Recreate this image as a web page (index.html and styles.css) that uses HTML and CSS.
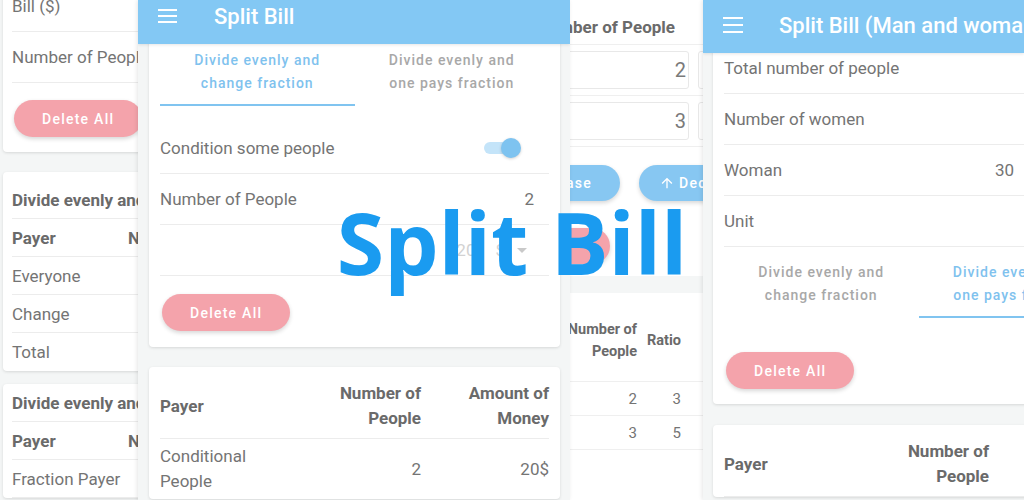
FILE: index.html
```html
<!DOCTYPE html>
<html lang="en">
<head>
<meta charset="utf-8">
<title>Split Bill</title>
<link rel="stylesheet" href="styles.css">
</head>
<body>
<main class="canvas">

  <!-- Screenshot A (left) -->
  <section class="shot shot-a">
    <div class="card a1">
      <div class="row r51">Bill ($)</div>
      <div class="row r51">Number of People</div>
      <div class="btn-wrap a-btn"><button class="pill pink">Delete All</button></div>
    </div>
    <div class="card a2">
      <div class="row r38 bold">Divide evenly and change fraction</div>
      <div class="row r38 bold"><span class="a-c1">Payer</span><span>Number of People</span></div>
      <div class="row r38">Everyone</div>
      <div class="row r38">Change</div>
      <div class="row r38 last">Total</div>
    </div>
    <div class="card a3">
      <div class="row r38 bold">Divide evenly and one pays fraction</div>
      <div class="row r38 bold"><span class="a-c1">Payer</span><span>Number of People</span></div>
      <div class="row r38">Fraction Payer</div>
    </div>
  </section>

  <!-- Screenshot C (behind) -->
  <section class="shot shot-c">
    <div class="c-card1">
      <div class="c-head">Number of People</div>
      <div class="c-inrow"><div class="c-box1">2</div><div class="c-box2"></div></div>
      <div class="c-inrow"><div class="c-box1">3</div><div class="c-box2"></div></div>
      <div class="c-btns">
        <button class="pill blue c-inc">Increase</button>
        <button class="pill blue c-dec"><svg class="arrow" viewBox="0 0 24 24" width="16" height="16"><path d="M4 12l1.41 1.41L11 7.83V20h2V7.83l5.58 5.59L20 12l-8-8-8 8z" fill="#fff"/></svg>Decrease</button>
      </div>
      <button class="pill pink c-del">Delete All</button>
    </div>
    <div class="c-card2">
      <div class="c-trow c-thead"><span class="cn">Number of<br>People</span><span class="cr">Ratio</span></div>
      <div class="c-trow c-data"><span class="cn">2</span><span class="cr">3</span></div>
      <div class="c-trow c-data"><span class="cn">3</span><span class="cr">5</span></div>
    </div>
  </section>

  <!-- Screenshot B (middle) -->
  <section class="shot shot-b">
    <header class="appbar b-bar">
      <span class="burger"><i></i><i></i><i></i></span>
      <span class="title">Split Bill</span>
    </header>
    <div class="card wide b1">
      <div class="tabs">
        <div class="tab active">Divide evenly and<br>change fraction</div>
        <div class="tab">Divide evenly and<br>one pays fraction</div>
      </div>
      <div class="list">
        <div class="row r51">Condition some people<span class="toggle"><span class="track"></span><span class="thumb"></span></span></div>
        <div class="row r51">Number of People<span class="val b-val">2</span></div>
        <div class="row r51 dd"><span class="dd-n">20</span><span class="dd-u">$</span><svg class="caret" viewBox="0 0 10 5" width="10" height="5"><path d="M0 0h10L5 5z" fill="#c9c9c9"/></svg></div>
      </div>
      <div class="btn-wrap b-btn"><button class="pill pink">Delete All</button></div>
    </div>
    <div class="card wide b2">
      <div class="trow thead"><span>Payer</span><span class="num">Number of<br>People</span><span class="num">Amount of<br>Money</span></div>
      <div class="trow tdata"><span>Conditional<br>People</span><span class="num">2</span><span class="num">20$</span></div>
    </div>
  </section>

  <!-- Screenshot D (right) -->
  <section class="shot shot-d">
    <header class="appbar d-bar">
      <span class="burger big"><i></i><i></i><i></i></span>
      <span class="title">Split Bill (Man and woman)</span>
    </header>
    <div class="card wide d1">
      <div class="row r51">Total number of people</div>
      <div class="row r51">Number of women</div>
      <div class="row r51">Woman<span class="val d-val">30</span></div>
      <div class="row r51">Unit</div>
      <div class="tabs">
        <div class="tab">Divide evenly and<br>change fraction</div>
        <div class="tab active">Divide evenly and<br>one pays fraction</div>
      </div>
      <div class="btn-wrap d-btn"><button class="pill pink">Delete All</button></div>
    </div>
    <div class="card wide d2">
      <div class="trow thead d-thead"><span>Payer</span><span class="num">Number of<br>People</span><span class="num">Amount of<br>Money</span></div>
    </div>
  </section>

  <h1 class="hero">Split Bill</h1>
</main>
</body>
</html>
```

FILE: styles.css
```css
* { box-sizing: border-box; margin: 0; padding: 0; }
html, body { width: 1024px; height: 500px; overflow: hidden; }
body {
  background: #f4f6f6;
  font-family: Roboto, "Liberation Sans", sans-serif;
  font-size: 17px;
  color: #747474;
}
.canvas { position: relative; width: 1024px; height: 500px; overflow: hidden; }

.shot { position: absolute; top: 0; height: 500px; overflow: hidden; background: #f4f6f6; }
.shot-a { left: 0; width: 138px; }
.shot-c { left: 570px; width: 133px; }
.shot-b { left: 138px; width: 432px; box-shadow: -1px 0 4px rgba(0,0,0,.10); }
.shot-d { left: 703px; width: 321px; box-shadow: -1px 0 4px rgba(0,0,0,.10); }

.card { background: #fff; border-radius: 4px; box-shadow: 0 1px 3px rgba(0,0,0,.12); }
.card.wide { width: 411px; }

.row {
  display: flex; align-items: center; white-space: nowrap;
  border-bottom: 1px solid #ececec;
}
.row.last { border-bottom: none; }
.r51 { height: 51px; }
.r38 { height: 38px; }
.bold { font-weight: 700; color: #6a6a6a; }

.pill {
  height: 37px; border: none; border-radius: 19px;
  padding: 0 28px; margin-left: 2px; flex-shrink: 0;
  font-family: Roboto, "Liberation Sans", sans-serif;
  font-size: 14px; font-weight: 500; letter-spacing: 1.25px;
  color: #fff; white-space: nowrap;
  box-shadow: 0 2px 4px rgba(0,0,0,.16);
  display: inline-flex; align-items: center;
}
.pink { background: #f4a3ab; }
.blue { background: #87c7f2; }

/* A */
.a1 { margin: -19px 0 0 3px; width: 300px; padding: 0 0 15px 9px; }
.a-btn { padding-top: 17px; }
.a2 { margin: 20px 0 0 3px; width: 300px; padding: 9px 0 0 9px; }
.a3 { margin: 13px 0 0 3px; width: 300px; padding: 0 0 0 9px; }
.a-c1 { width: 116px; flex-shrink: 0; }

/* Appbar */
.appbar {
  position: relative; z-index: 2;
  height: 56px; background: #83c8f4;
  display: flex; align-items: center; padding-left: 20px;
  box-shadow: 0 1px 3px rgba(0,0,0,.10);
  color: #fff; white-space: nowrap;
}
.appbar .title { margin-left: 37px; font-size: 22px; font-weight: 500; flex-shrink: 0; }
.b-bar { margin-top: -12px; }
.d-bar { margin-top: -3px; }
.burger { display: flex; flex-direction: column; gap: 4px; width: 19px; flex-shrink: 0; }
.burger i { display: block; height: 2px; background: #fff; }
.burger.big { gap: 5px; width: 20px; }
.d-bar .title { margin-left: 36px; }

/* Tabs */
.tabs { display: grid; grid-template-columns: 1fr 1fr; }
.tab {
  height: 71px; padding-top: 14px; line-height: 23px;
  text-align: center; font-size: 14px; font-weight: 500; letter-spacing: 1px;
  color: #a8a8a8;
}
.tab.active { color: #7fc2ee; border-bottom: 2px solid #80c4f0; }

/* B */
.b1 { margin: -9px 0 0 11px; padding: 0 11px 16px; }
.list { margin-top: 17px; }
.val { margin-left: auto; }
.b-val { margin-right: 15px; }
.toggle { position: relative; margin-left: auto; margin-right: 28px; width: 37px; height: 20px; flex-shrink: 0; }
.track { position: absolute; left: 0; top: 4px; width: 32px; height: 12px; border-radius: 6px; background: #c4e4f9; }
.thumb { position: absolute; right: 0; top: 0; width: 20px; height: 20px; border-radius: 50%; background: #7ec3f0; box-shadow: 0 1px 3px rgba(0,0,0,.18); }
.dd { justify-content: flex-end; color: #d2d2d2; padding-right: 22px; }
.dd-u { margin-left: 20px; }
.caret { margin-left: 12px; }
.b-btn { padding-top: 18px; }
.b2 { margin: 20px 0 0 11px; padding: 0 11px; }

.trow {
  display: grid; grid-template-columns: 1fr 110px 128px; align-items: center;
  line-height: 25px;
}
.trow .num { text-align: right; }
.thead { padding: 14px 0 7px; border-bottom: 1px solid #ececec; font-weight: 700; color: #6a6a6a; }
.tdata { padding: 5px 0; }

/* C */
.c-card1 { background: #fff; height: 276px; }
.c-head {
  height: 45px; padding: 9px 28px 0 0;
  display: flex; justify-content: flex-end; align-items: center;
  font-weight: 700; color: #6a6a6a; white-space: nowrap;
  border-bottom: 1px solid #efefef;
}
.c-inrow { height: 51px; display: flex; align-items: center; border-bottom: 1px solid #efefef; }
.c-box1 {
  margin-left: -20px; width: 139px; height: 38px; flex-shrink: 0;
  border: 1px solid #e8e8e8; border-radius: 3px;
  display: flex; align-items: center; justify-content: flex-end;
  padding-right: 2px; font-size: 20px; color: #7a7a7a;
}
.c-box2 { margin-left: 9px; width: 40px; height: 38px; flex-shrink: 0; border: 1px solid #e8e8e8; border-radius: 3px; }
.c-btns { display: flex; padding-top: 18px; }
.c-btns .pill { height: 36px; }
.c-inc { margin-left: -90px; width: 140px; justify-content: flex-end; }
.c-dec { margin-left: 19px; padding-left: 20px; }
.arrow { margin-right: 4px; }
.c-del { margin: 27px 0 0 -120px; width: 160px; height: 36px; justify-content: center; }
.c-card2 { background: #fff; margin-top: 17px; height: 300px; }
.c-trow { display: flex; justify-content: flex-end; padding-right: 22px; border-bottom: 1px solid #efefef; }
.c-trow .cn { width: 80px; text-align: right; flex-shrink: 0; }
.c-trow .cr { width: 44px; text-align: right; flex-shrink: 0; }
.c-thead { padding-top: 26px; padding-bottom: 18px; font-size: 14.5px; line-height: 22px; font-weight: 700; color: #6a6a6a; align-items: center; }
.c-data { height: 34px; align-items: center; font-size: 15px; }

/* D */
.d1 { margin: -10px 0 0 10px; padding: 0 11px 15px; }
.d-val { margin-right: 99px; }
.d-btn { padding-top: 34px; }
.d2 { margin: 21px 0 0 10px; padding: 0 11px; }
.d-thead { grid-template-columns: 1fr 110px 124px; }

/* Hero */
.hero {
  position: absolute; left: 0; right: 0; top: 199px;
  text-align: center;
  font-family: "Open Sans", "DejaVu Sans", sans-serif;
  font-weight: 700; font-size: 86px; line-height: 1;
  color: #1a9bf0;
}
```
